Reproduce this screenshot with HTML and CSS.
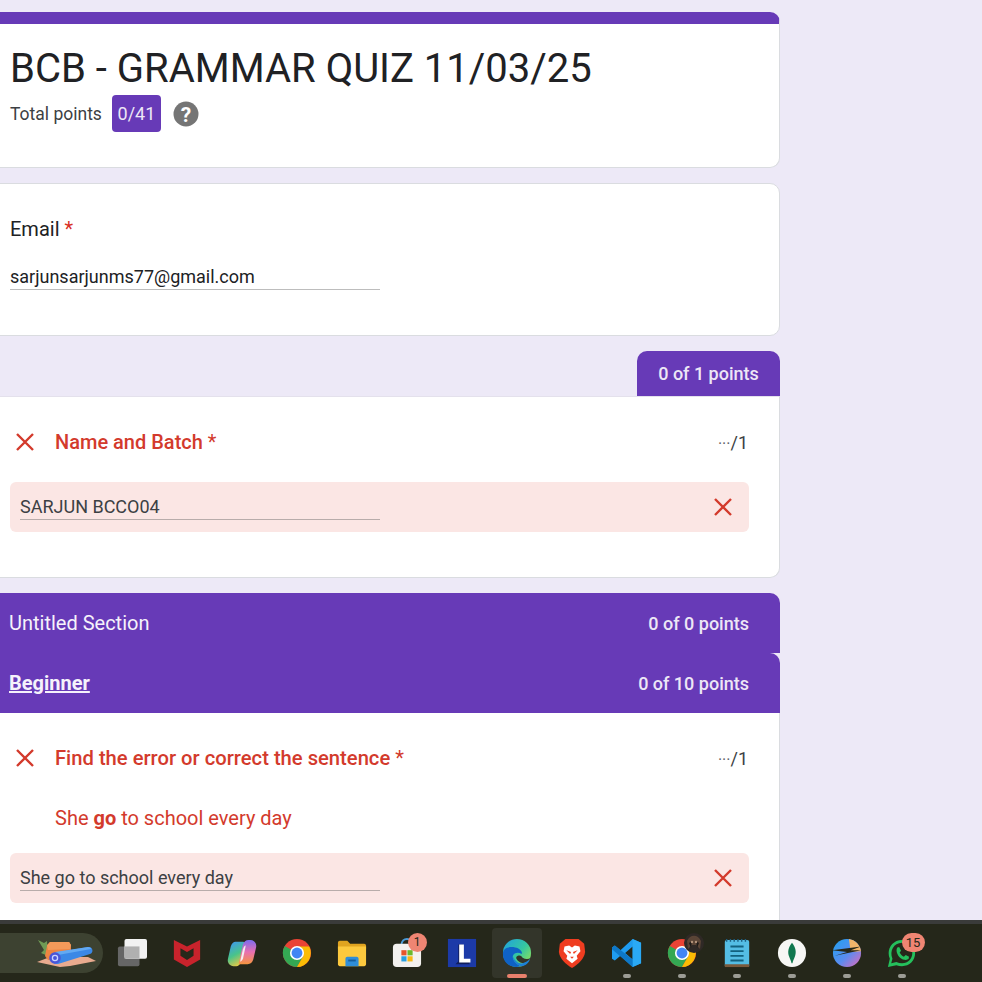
FILE: index.html
```html
<!DOCTYPE html>
<html lang="en">
<head>
<meta charset="utf-8">
<title>BCB - GRAMMAR QUIZ 11/03/25</title>
<link rel="stylesheet" href="styles.css">
</head>
<body>
<div class="screen">
  <main class="page">
    <div class="column">
      <section class="card header-card">
        <h1 class="title">BCB - GRAMMAR QUIZ 11/03/25</h1>
        <div class="total">
          <span>Total points</span>
          <span class="score-pill">0/41</span>
          <svg class="help" viewBox="0 0 26 26"><circle cx="13" cy="13" r="12.5" fill="#757575"/><text x="13" y="20.500" text-anchor="middle" class="help-q">?</text></svg>
        </div>
      </section>

      <section class="card email-card">
        <div class="label">Email <span class="req">*</span></div>
        <div class="email-value">sarjunsarjunms77@gmail.com</div>
      </section>

      <div class="tab-row"><div class="tab">0 of 1 points</div></div>
      <section class="card question-card tabbed">
        <div class="q-head">
          <svg class="x" viewBox="0 0 20 20"><path d="M2 2 18 18M18 2 2 18"/></svg>
          <span class="q-title">Name and Batch <span class="q-star">*</span></span>
          <span class="q-score"><span class="dots">···</span>/1</span>
        </div>
        <div class="answer">
          <div class="answer-text">SARJUN BCCO04</div>
          <svg class="x" viewBox="0 0 20 20"><path d="M2 2 18 18M18 2 2 18"/></svg>
        </div>
      </section>

      <div class="section-stack">
        <div class="band band-first"><span class="band-name">Untitled Section</span><span class="band-points">0 of 0 points</span></div>
        <div class="band band-second"><span class="band-name strong">Beginner</span><span class="band-points">0 of 10 points</span></div>
      </div>
      <section class="card question-card flush">
        <div class="q-head">
          <svg class="x" viewBox="0 0 20 20"><path d="M2 2 18 18M18 2 2 18"/></svg>
          <span class="q-title wide-title">Find the error or correct the sentence <span class="q-star">*</span></span>
          <span class="q-score"><span class="dots">···</span>/1</span>
        </div>
        <div class="q-sentence">She <b>go</b> to school every day</div>
        <div class="answer">
          <div class="answer-text">She go to school every day</div>
          <svg class="x" viewBox="0 0 20 20"><path d="M2 2 18 18M18 2 2 18"/></svg>
        </div>
      </section>
    </div>
  </main>

  <footer class="taskbar">
    <div class="widget">
      <svg class="widget-art" viewBox="0 0 64 30">
        <path d="M1 24 14 19H52L60 23 34 28 24 29Z" fill="#e9ab8f"/>
        <path d="M2 2 8 5 11 3 12 18 5 15 8 12Z" fill="#6f9a55"/>
        <path d="M11 8 14 4H33L35 7V16L20 22H12L9 18Z" fill="#ee8442"/>
        <path d="M11 7 14 4H33L35 7 34 11 12 12Z" fill="#f39a5a"/>
        <path d="M17 15 52 9C57 8 58 15 54 16L22 26C14 27 12 17 17 15Z" fill="#3b88e6"/>
        <path d="M19 14 52 9C54 9 55 10 55 11L22 17Z" fill="#62a9f2"/>
        <circle cx="19" cy="20" r="5.800" fill="#4a55d8"/>
        <circle cx="19" cy="20" r="2.600" fill="none" stroke="#c9d4ff" stroke-width="1.300"/>
      </svg>
    </div>

    <div class="tb-item">
      <svg viewBox="0 0 32 32"><rect x="1" y="9" width="23" height="21" rx="2" fill="#666"/><rect x="8" y="1" width="24" height="21" rx="2" fill="#f2f2f2"/><rect x="8" y="9" width="16" height="13" fill="#b0b0b0"/></svg>
    </div>
    <div class="tb-item">
      <svg viewBox="0 0 32 32"><path d="M2 2 16 9 30 2V23L16 31 2 23Z" fill="#c8232c"/><path d="M9 11 16 15 23 11V19L16 23.500 9 19Z" fill="#26281a"/></svg>
    </div>
    <div class="tb-item">
      <svg viewBox="0 0 32 32">
        <defs>
          <linearGradient id="cpA" x1="0.300" y1="0" x2="0.700" y2="1"><stop offset="0" stop-color="#3f9be8"/><stop offset=".5" stop-color="#49c48a"/><stop offset="1" stop-color="#f5c73f"/></linearGradient>
          <linearGradient id="cpB" x1="0.500" y1="0" x2="0.500" y2="1"><stop offset="0" stop-color="#7a6bf0"/><stop offset=".5" stop-color="#e86fb0"/><stop offset="1" stop-color="#f5953f"/></linearGradient>
        </defs>
        <path d="M9 4H17C19 4 20 6 19 8L15 26C14 28 12 30 10 30H7C3 30 0 26 1 22L4 9C5 6 7 4 9 4Z" fill="url(#cpA)"/>
        <path d="M22 28H14C13 28 12 27 13 25L17 7C18 4 20 2 23 2H25C29 2 32 6 31 10L28 23C27 26 25 28 22 28Z" fill="url(#cpB)"/>
        <path d="M17 12C18 9 19 8 20 8L17 22C16 24 15 25 14 25Z" fill="#f7ecf2"/>
      </svg>
    </div>
    <div class="tb-item">
      <svg viewBox="0 0 32 32"><use href="#chrome"/></svg>
    </div>
    <div class="tb-item">
      <svg viewBox="0 0 32 32"><path d="M1 5C1 4 2 3 3 3H11L14 6H29C30 6 31 7 31 8V12H1Z" fill="#e0a420"/><path d="M1 9H31V28C31 29 30 30 29 30H3C2 30 1 29 1 28Z" fill="#fcc93e"/><path d="M9 22C9 21 10 20 11 20H21C22 20 23 21 23 22V30H9Z" fill="#2f8ed8"/><rect x="12" y="23" width="8" height="2" fill="#155d9c"/></svg>
    </div>
    <div class="tb-item">
      <svg viewBox="0 0 32 32"><path d="M10 8C10 3 13 1 16 1S22 3 22 8" fill="none" stroke="#4a9bd8" stroke-width="2"/><rect x="1" y="6" width="30" height="25" rx="4" fill="#f3f1ef"/><rect x="10" y="13" width="5.500" height="5.500" fill="#e8542a"/><rect x="16.500" y="13" width="5.500" height="5.500" fill="#6cb82c"/><rect x="10" y="19.500" width="5.500" height="5.500" fill="#2a9fe0"/><rect x="16.500" y="19.500" width="5.500" height="5.500" fill="#f8b816"/></svg>
      <span class="badge">1</span>
    </div>
    <div class="tb-item">
      <svg viewBox="0 0 32 32"><rect x="1" y="1" width="30" height="30" fill="#1c3aa8"/><path d="M9 28 12 25V7H17V23H24V28Z" fill="#101e5c"/><path d="M13 7H18V22H25V26H13Z" fill="#fff"/></svg>
    </div>
    <div class="tb-item active">
      <svg viewBox="0 0 32 32">
        <defs>
          <linearGradient id="edgeA" x1="0" y1="0" x2="1" y2="0.800"><stop offset="0" stop-color="#1f9fe0"/><stop offset=".6" stop-color="#35c8a0"/><stop offset="1" stop-color="#8fe05a"/></linearGradient>
        </defs>
        <circle cx="16" cy="16" r="15" fill="url(#edgeA)"/>
        <path d="M1 17C1 10 8 9 14 10 19 11 22 14 21 17 18 15 14 15 12 18 10 22 14 27 20 30 12 33 1 28 1 17Z" fill="#0f62c6"/>
        <path d="M31 21C28 27 22 28 18 25 15 23 14 20 17 19 20 18 21 20 22 21 25 23 28 23 31 21Z" fill="#33352a"/>
        <path d="M30 22C28 28 24 30 20 30 15 28 11 24 12 20 13 24 18 28 22 27 25 26 28 24 30 22Z" fill="#1b80d8"/>
      </svg>
    </div>
    <div class="tb-item">
      <svg viewBox="0 0 32 32"><path d="M9 1H23L29 6 30 15C29 22 23 28 16 32 9 28 3 22 2 15L3 6Z" fill="#ef3d20"/><path d="M8 9 13 8 16 10 19 8 24 9 25 14 21 19 22 22 16 27 10 22 11 19 7 14Z" fill="#fff"/><path d="M10 13 15 15 14 17ZM22 13 17 15 18 17ZM14 20H18L16 22Z" fill="#ef3d20"/></svg>
    </div>
    <div class="tb-item running">
      <svg viewBox="0 0 32 32"><path d="M22 1 31 5V27L22 31 9 19 3 24 0 22V10L3 8 9 13ZM22 9 14 16 22 23Z" fill="#1f9cf0"/><path d="M22 1 31 5V27L22 31Z" fill="#2aa9f5"/><path d="M0 10 3 8 22 23V31L0 12Z" fill="#0e78c8"/></svg>
    </div>
    <div class="tb-item running">
      <svg viewBox="0 0 32 32"><use href="#chrome"/></svg>
      <svg class="avatar" viewBox="0 0 20 20"><circle cx="10" cy="10" r="10" fill="#2f2926"/><path d="M3 8C6 1 14 1 17 8L16 16 12 12H8L4 16Z" fill="#5a4436"/><path d="M5 10 8 8 7 15ZM15 10 12 8 13 15Z" fill="#1d1a18"/><circle cx="8" cy="9" r="1.200" fill="#b3937a"/><circle cx="12" cy="9" r="1.200" fill="#b3937a"/></svg>
    </div>
    <div class="tb-item running">
      <svg viewBox="0 0 32 32"><rect x="3" y="2" width="26" height="29" rx="2" fill="#54bde4"/><rect x="3" y="28" width="26" height="3" fill="#7a5a3c"/><path d="M5 1V4M9 1V4M13 1V4M17 1V4M21 1V4M25 1V4" stroke="#1d5f82" stroke-width="1.500"/><path d="M9 9H23M9 14H23M9 19H23M9 24H23" stroke="#12617f" stroke-width="2"/></svg>
    </div>
    <div class="tb-item running">
      <svg viewBox="0 0 32 32"><circle cx="16" cy="16" r="15" fill="#f7f7f5"/><path d="M16 5C20 10 21 15 19 20 18 23 17 24 16.500 27H15.500C15 24 14 23 13 20 11 15 12 10 16 5Z" fill="#11784f"/></svg>
    </div>
    <div class="tb-item running">
      <svg viewBox="0 0 32 32">
        <defs>
          <linearGradient id="nbA" x1="0" y1="0" x2="1" y2="1"><stop offset="0" stop-color="#1fa1ef"/><stop offset=".55" stop-color="#5a8cf0"/><stop offset="1" stop-color="#e868b8"/></linearGradient>
        </defs>
        <circle cx="16" cy="16" r="15" fill="url(#nbA)"/>
        <path d="M18 1A15 15 0 0 1 31 14L20 15Z" fill="#f2b56a"/>
        <path d="M0 13 31 9 20 13 31 13 3 19 16 15Z" fill="#26281a"/>
      </svg>
    </div>
    <div class="tb-item running">
      <svg viewBox="0 0 32 32"><path d="M1 31 3 22C-1 13 5 2 16 2 24 2 30 8 30 16S24 30 16 30C14 30 12 29.500 10 29Z" fill="#25c05c"/><path d="M4.500 27 5.800 22C2.500 14 7 5 16 5 22.500 5 27 10 27 16S22.500 27 16 27C14 27 12 26.500 10 25.500Z" fill="#26281a"/><path d="M11 10 13 9.500 15 13.500 13.500 15.500C14.500 17.500 16 19 18 20L20 18 23.500 20 23 22.500C21 24 17 23.500 14 21 11 18 9 13 11 10Z" fill="#25c05c"/></svg>
      <span class="badge wide">15</span>
    </div>
  </footer>
</div>

<svg class="defs" aria-hidden="true">
  <defs>
    <symbol id="chrome" viewBox="0 0 32 32">
      <circle cx="16" cy="16" r="15" fill="#ea4335"/>
      <path d="M16 16 3 8.500A15 15 0 0 0 16 31L23 19Z" fill="#34a853"/>
      <path d="M16 9H29A15 15 0 0 1 16 31L23 19Z" fill="#fbbc04"/>
      <circle cx="16" cy="16" r="7.500" fill="#fff"/>
      <circle cx="16" cy="16" r="5.800" fill="#4285f4"/>
    </symbol>
  </defs>
</svg>
</body>
</html>
```
FILE: styles.css
```css
* { box-sizing: border-box; }

html, body { margin: 0; padding: 0; }

body {
  background: #ede9f7;
  font-family: Roboto, "Liberation Sans", sans-serif;
  color: #202124;
}

.defs { display: none; }

.screen {
  height: 982px;
  width: 982px;
  display: flex;
  flex-direction: column;
  overflow: hidden;
}

.page {
  flex: 1;
  min-height: 0;
  overflow: hidden;
  padding-top: 12px;
}

.column {
  width: 801px;
  margin-left: -21px;
  display: flex;
  flex-direction: column;
}

.card {
  background: #fff;
  border: 1px solid #dadce0;
  border-radius: 10px;
  padding-left: 30px;
  flex: none;
}

.header-card {
  height: 156px;
  border-top: 12px solid #673ab7;
  padding-top: 20px;
}

.title {
  margin: 0;
  font-size: 40px;
  line-height: 50px;
  font-weight: 400;
}

.total {
  display: flex;
  align-items: center;
  margin-top: 1px;
  font-size: 17.500px;
  color: #3c4043;
}

.score-pill {
  margin-left: 10px;
  width: 49px;
  height: 37px;
  display: flex;
  align-items: center;
  justify-content: center;
  background: #673ab7;
  color: #ede7f6;
  border-radius: 4px;
  font-size: 18px;
}

.help { width: 26px; height: 26px; margin-left: 12px; }
.help-q { fill: #fff; font: 700 21px Roboto, sans-serif; }

.email-card {
  height: 153px;
  margin-top: 15px;
  padding-top: 32px;
}

.label { font-size: 20px; line-height: 26px; color: #202124; }
.req { color: #d93025; }

.email-value {
  width: 370px;
  margin-top: 23px;
  height: 25px;
  font-size: 18px;
  line-height: 24px;
  border-bottom: 1px solid #bdbdbd;
  color: #202124;
}

.tab-row { display: flex; justify-content: flex-end; margin-top: 15px; }

.tab {
  width: 143px;
  height: 45px;
  background: #673ab7;
  color: #ede7f6;
  border-radius: 10px 10px 0 0;
  font-weight: 500;
  font-size: 18px;
  display: flex;
  align-items: center;
  justify-content: center;
}

.question-card { padding-right: 30px; }

.tabbed {
  height: 182px;
  border-radius: 0 0 10px 10px;
  border-top: 1px solid #e4e1ec;
  padding-top: 27px;
}

.flush {
  height: 260px;
  border-radius: 0;
  border-top: 0;
  padding-top: 27px;
}

.q-head {
  display: flex;
  align-items: center;
  height: 36px;
  padding-right: 1px;
}

.x {
  width: 20px;
  height: 20px;
  flex: none;
  fill: none;
  stroke: #d33a2c;
  stroke-width: 2.400;
}

.q-head .x { margin-left: 5px; }

.q-title {
  margin-left: 20px;
  flex: 1;
  color: #d33a2c;
  font-size: 20px;
  font-weight: 500;
}

.wide-title { font-size: 20.200px; }

.q-star { font-weight: 400; }

.q-score { font-size: 18px; color: #3c4043; }
.dots { color: #5f6368; font-size: 16px; }

.answer {
  height: 50px;
  margin-top: 22px;
  padding: 0 16px 0 10px;
  background: #fbe6e4;
  border-radius: 6px;
  display: flex;
  align-items: center;
  justify-content: space-between;
}

.answer-text {
  width: 360px;
  height: 26px;
  font-size: 18px;
  line-height: 26px;
  border-bottom: 1px solid #b8acaa;
  color: #3c4043;
}

.q-sentence {
  margin: 30px 0 0 45px;
  color: #d33a2c;
  font-size: 20px;
  line-height: 24px;
}

.q-sentence + .answer { margin-top: 23px; }

.section-stack { margin-top: 15px; }

.band {
  height: 60px;
  background: #673ab7;
  color: #ede7f6;
  display: flex;
  align-items: center;
  justify-content: space-between;
  padding: 0 31px 0 30px;
}

.band-first { border-radius: 10px 10px 0 0; }
.band-second { border-radius: 0 10px 0 0; }

.band-name { font-size: 20px; color: #f6f2fb; }
.band-name.strong { font-weight: 700; text-decoration: underline; }
.band-points { font-size: 18px; font-weight: 500; }

.taskbar {
  height: 62px;
  flex: none;
  background: #25271a;
  border-top: 4px solid #3a3b3a;
  display: flex;
  align-items: center;
}

.widget {
  width: 103px;
  height: 40px;
  margin-right: 1.500px;
  flex: none;
  background: #3d4231;
  border-radius: 0 20px 20px 0;
  display: flex;
  justify-content: flex-end;
  align-items: center;
  padding-right: 3px;
}

.widget-art { width: 64px; height: 30px; }

.tb-item {
  width: 55px;
  height: 50px;
  flex: none;
  position: relative;
  display: flex;
  align-items: center;
  justify-content: center;
}

.tb-item > svg:first-child { width: 30px; height: 30px; }

.tb-item.running::after,
.tb-item.active::after {
  content: "";
  position: absolute;
  left: 50%;
  bottom: 0;
  transform: translateX(-50%);
  width: 8px;
  height: 4px;
  border-radius: 2px;
  background: #9c9c95;
}

.tb-item.active {
  background: #33352a;
  width: 50px;
  margin: 0 2.500px;
  border-radius: 4px;
}

.tb-item.active::after {
  width: 20px;
  background: #e8806c;
}

.avatar {
  position: absolute;
  top: 5px;
  left: 29px;
  width: 20px;
  height: 20px;
}

.badge {
  position: absolute;
  top: 5px;
  left: 28px;
  width: 19px;
  height: 19px;
  border-radius: 50%;
  background: #ef8573;
  color: #26281a;
  font-size: 12px;
  line-height: 19px;
  text-align: center;
}

.badge.wide { width: 23px; left: 27px; border-radius: 10px; font-size: 13px; }
```
